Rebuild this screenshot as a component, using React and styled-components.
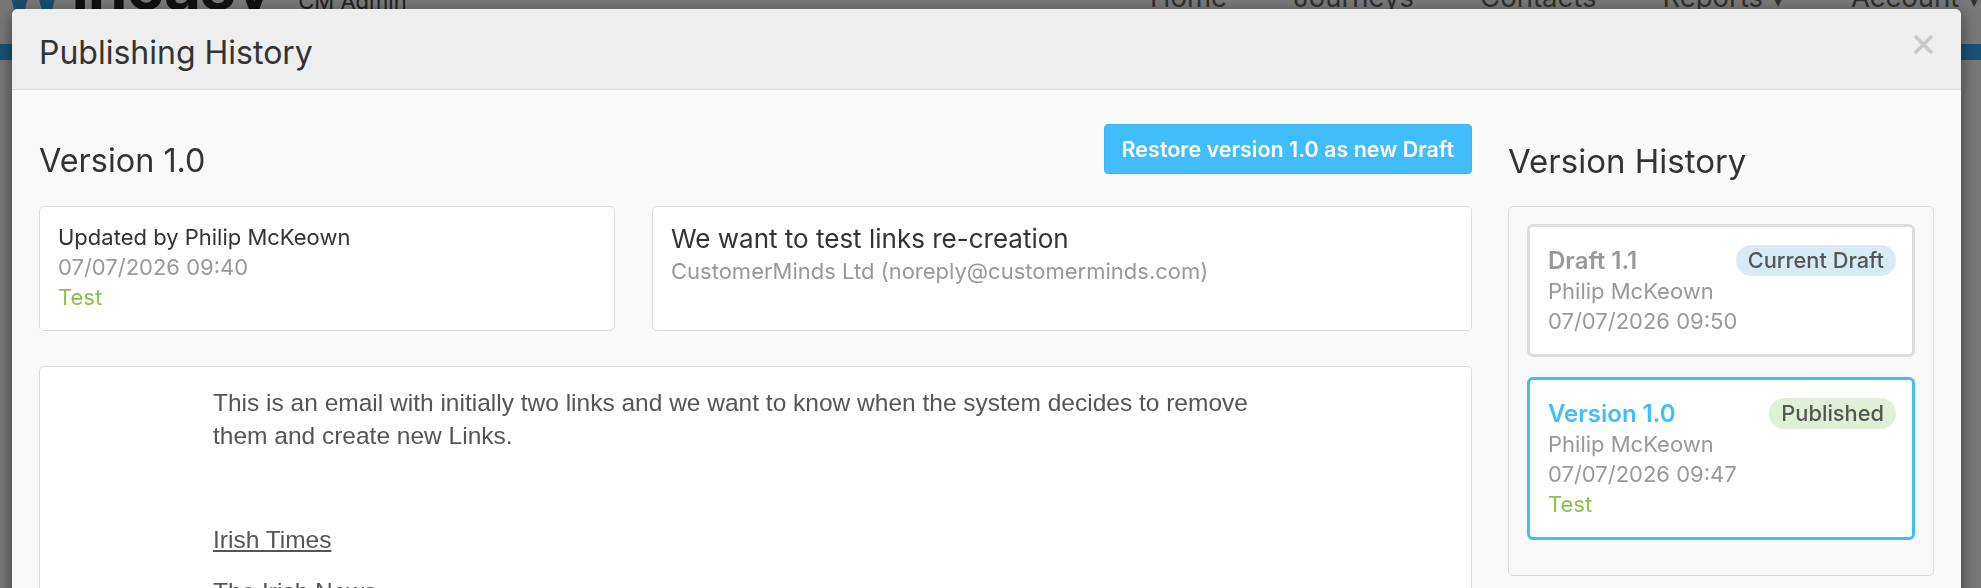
import React from 'react';
import styled, { createGlobalStyle } from 'styled-components';

const GlobalStyle = createGlobalStyle`
  html, body {
    margin: 0;
    height: 100%;
    overflow: hidden;
    background: #fff;
    font-family: Inter, "Noto Sans", sans-serif;
  }
  * { box-sizing: border-box; }
`;

const versions = [
  {
    title: 'Draft 1.1',
    badge: 'Current Draft',
    kind: 'draft',
    author: 'Philip McKeown',
    date: '07/07/2026 09:50',
  },
  {
    title: 'Version 1.0',
    badge: 'Published',
    kind: 'published',
    author: 'Philip McKeown',
    date: '07/07/2026 09:47',
    note: 'Test',
    active: true,
  },
];

const navLinks = ['Home', 'Journeys', 'Contacts', 'Reports ▾', 'Account ▾'];

// ---- page behind the dialog ----

const Page = styled.div`
  height: 100vh;
  background: #fff;
`;

const NavBar = styled.header`
  height: 44px;
  display: flex;
  align-items: flex-start;
  overflow: hidden;
`;

const Logo = styled.div`
  display: flex;
  margin-top: -46px;
  font-size: 64px;
  line-height: 64px;
  font-weight: 700;
  letter-spacing: -1px;
`;

const LogoMark = styled.span`
  color: #3aa6e0;
`;

const LogoWord = styled.span`
  color: #222;
  margin-left: 6px;
`;

const AdminLabel = styled.span`
  margin: -12px 0 0 26px;
  font-size: 22px;
  color: #444;
`;

const NavLinks = styled.nav`
  display: flex;
  gap: 66px;
  margin: -16px 0 0 auto;
  padding-right: 0;
`;

const NavLink = styled.a`
  font-size: 27.5px;
  line-height: 27px;
  color: #666;
  white-space: nowrap;
`;

const Strip = styled.div`
  height: 16px;
  background: #37b0f5;
`;

const Backdrop = styled.div`
  position: fixed;
  inset: 0;
  background: rgba(0, 0, 0, 0.53);
`;

// ---- dialog ----

const Modal = styled.div`
  position: absolute;
  top: 9px;
  left: 12px;
  right: 20px;
  border-radius: 6px;
  overflow: hidden;
  background: #f9f9f9;
  box-shadow: 0 5px 15px rgba(0, 0, 0, 0.5);
`;

const ModalHeader = styled.div`
  display: flex;
  justify-content: space-between;
  align-items: flex-start;
  height: 81px;
  padding: 24px 27px 0 27px;
  background: #eee;
  border-bottom: 1px solid #ddd;
`;

const ModalTitle = styled.h4`
  margin: 0;
  font-size: 32px;
  line-height: 40px;
  font-weight: 400;
  color: #333;
`;

const Close = styled.button`
  margin-top: 1px;
  padding: 0;
  width: 21px;
  height: 21px;
  border: 0;
  background: none;
  display: flex;
`;

const ModalBody = styled.div`
  display: grid;
  grid-template-columns: 1fr 426px;
  column-gap: 36px;
  padding: 34px 27px 0;
`;

const Column = styled.div`
  min-width: 0;
`;

const HeadRow = styled.div`
  display: flex;
  justify-content: space-between;
  align-items: flex-start;
`;

const Heading = styled.h3`
  margin: 17px 0 0;
  font-size: ${({ $size }) => $size || 32.4}px;
  line-height: 40px;
  font-weight: 400;
  color: #333;
`;

const RestoreButton = styled.button`
  height: 50px;
  padding: 0 17px;
  border: 1px solid #3cb6f5;
  border-radius: 4px;
  background: #42bdfc;
  color: #fff;
  font-family: Inter, sans-serif;
  font-size: 21.5px;
  font-weight: 600;
`;

const InfoRow = styled.div`
  display: grid;
  grid-template-columns: 576px 1fr;
  gap: 37px;
  margin-top: 25px;
`;

const InfoCard = styled.div`
  min-height: 125px;
  padding: 15px 18px;
  background: #fff;
  border: 1px solid #ddd;
  border-radius: 5px;
`;

const Line = styled.div`
  font-size: ${({ $size }) => $size || 22}px;
  line-height: ${({ $lh }) => $lh || 30}px;
  color: ${({ $tone }) =>
    $tone === 'muted' ? '#999' : $tone === 'green' ? '#8cc152' : '#333'};
  white-space: nowrap;
`;

const EmailCard = styled.div`
  height: 260px;
  margin-top: 35px;
  padding: 19px 0 0 173px;
  background: #fff;
  border: 1px solid #ddd;
  border-bottom: 0;
  border-radius: 5px 5px 0 0;
`;

const EmailBody = styled.div`
  max-width: 1060px;
  font-family: "Liberation Sans", Arial, sans-serif;
  font-size: 24.5px;
  line-height: 33px;
  color: #555;

  p { margin: 0 0 19px; }
  a { color: #555; text-decoration: underline; }
`;

const HistoryPanel = styled.div`
  display: flex;
  flex-direction: column;
  gap: 20px;
  margin-top: 25px;
  padding: 17px 18px 35px;
  background: #f9f9f9;
  border: 1px solid #ddd;
  border-radius: 5px;
`;

const VersionCard = styled.div`
  padding: 17px 16px 18px 18px;
  background: #fff;
  border: 3px solid ${({ $active }) => ($active ? '#42bdfc' : '#ddd')};
  border-radius: 6px;
`;

const CardHead = styled.div`
  display: flex;
  justify-content: space-between;
  align-items: center;
  height: 32px;
`;

const CardTitle = styled.span`
  font-size: 24px;
  font-weight: 600;
  color: ${({ $active }) => ($active ? '#42bdfc' : '#999')};
`;

const Badge = styled.span`
  height: 31px;
  line-height: 31px;
  padding: 0 12px;
  border-radius: 16px;
  font-size: 21.8px;
  font-weight: 500;
  color: #555;
  background: ${({ $kind }) => ($kind === 'published' ? '#dff0d8' : '#d9eaf7')};
`;

const CloseIcon = () => (
  <svg width="21" height="21" viewBox="0 0 21 21">
    <path d="M2 2 L19 19 M19 2 L2 19" stroke="#c8c8c8" strokeWidth="3.4" />
  </svg>
);

export default function App() {
  return (
    <>
      <GlobalStyle />
      <Page>
        <NavBar>
          <Logo>
            <LogoMark>W</LogoMark>
            <LogoWord>incasv</LogoWord>
          </Logo>
          <AdminLabel>CM Admin</AdminLabel>
          <NavLinks>
            {navLinks.map((l) => (
              <NavLink key={l}>{l}</NavLink>
            ))}
          </NavLinks>
        </NavBar>
        <Strip />
      </Page>
      <Backdrop />

      <Modal>
        <ModalHeader>
          <ModalTitle>Publishing History</ModalTitle>
          <Close aria-label="Close">
            <CloseIcon />
          </Close>
        </ModalHeader>

        <ModalBody>
          <Column>
            <HeadRow>
              <Heading>Version 1.0</Heading>
              <RestoreButton>Restore version 1.0 as new Draft</RestoreButton>
            </HeadRow>

            <InfoRow>
              <InfoCard>
                <Line>Updated by Philip McKeown</Line>
                <Line $tone="muted">07/07/2026 09:40</Line>
                <Line $tone="green">Test</Line>
              </InfoCard>
              <InfoCard>
                <Line $size={26} $lh={34}>We want to test links re-creation</Line>
                <Line $tone="muted">CustomerMinds Ltd (noreply@customerminds.com)</Line>
              </InfoCard>
            </InfoRow>

            <EmailCard>
              <EmailBody>
                <p>
                  This is an email with initially two links and we want to know when the system
                  decides to remove them and create new Links.
                </p>
                <p>&nbsp;</p>
                <p>
                  <a>Irish Times</a>
                </p>
                <p>The Irish News</p>
              </EmailBody>
            </EmailCard>
          </Column>

          <Column>
            <Heading $size={33}>Version History</Heading>
            <HistoryPanel>
              {versions.map((v) => (
                <VersionCard key={v.title} $active={v.active}>
                  <CardHead>
                    <CardTitle $active={v.active}>{v.title}</CardTitle>
                    <Badge $kind={v.kind}>{v.badge}</Badge>
                  </CardHead>
                  <Line $tone="muted">{v.author}</Line>
                  <Line $tone="muted">{v.date}</Line>
                  {v.note && <Line $tone="green">{v.note}</Line>}
                </VersionCard>
              ))}
            </HistoryPanel>
          </Column>
        </ModalBody>
      </Modal>
    </>
  );
}
